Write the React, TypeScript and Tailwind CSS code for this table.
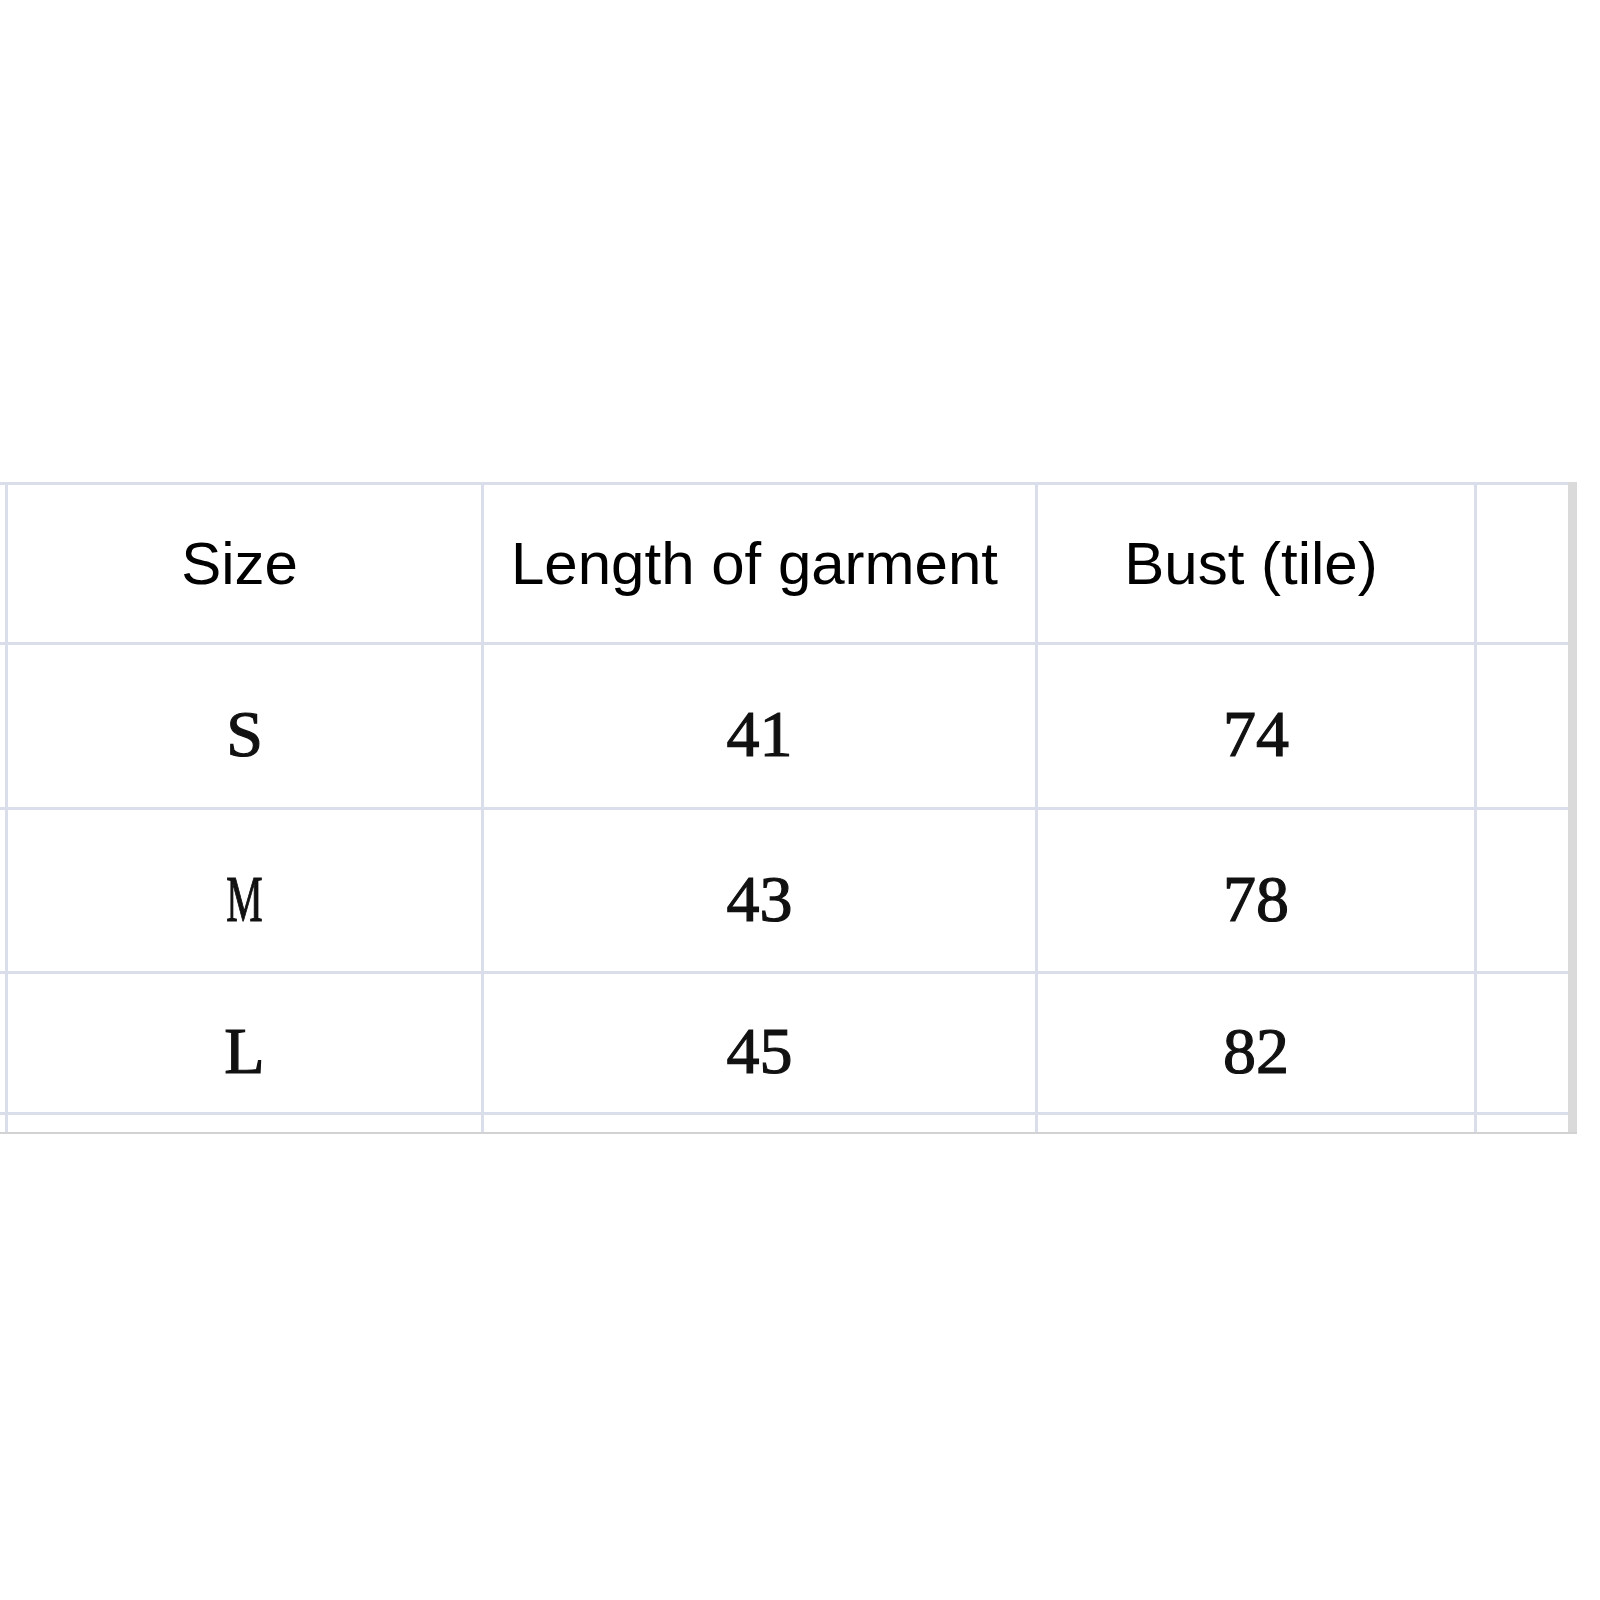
const headers = ["Size", "Length of garment", "Bust (tile)"];

const rows = [
  ["S", "41", "74"],
  ["M", "43", "78"],
  ["L", "45", "82"],
];

const rowHeights = ["h-[162px]", "h-[161px]", "h-[138px]"];

function BodyCell({ value }: { value: string }) {
  return (
    <div className="flex items-center justify-center bg-white pt-[16px]">
      <span
        className={`inline-block font-['Liberation_Serif',serif] text-[66px] leading-none text-[#111] [-webkit-text-stroke:1.2px_#111] ${
          value === "M" ? "scale-x-[0.62]" : ""
        }`}
      >
        {value}
      </span>
    </div>
  );
}

export default function App() {
  return (
    <div className="min-h-[1600px] w-[1600px] bg-white pt-[482px]">
      <div className="w-[1577px]">
        <div className="flex">
          {/* grid lines come from the gap showing the background */}
          <div className="grid grid-cols-[5px_473px_551px_436px_91px] gap-[3px] bg-[#d9deea] pt-[3px]">
            {/* header row */}
            <div className="h-[157px] bg-white" />
            {headers.map((h) => (
              <div
                key={h}
                className="flex h-[157px] items-center justify-center bg-white pr-[10px] font-['Liberation_Sans',Arial,sans-serif] text-[60px] text-black"
              >
                {h}
              </div>
            ))}
            <div className="h-[157px] bg-white" />

            {/* data rows */}
            {rows.map((r, i) => (
              <div key={r[0]} className="contents">
                <div className={`${rowHeights[i]} bg-white`} />
                {r.map((v, j) => (
                  <BodyCell key={j} value={v} />
                ))}
                <div className={`${rowHeights[i]} bg-white`} />
              </div>
            ))}

            {/* partial row cut off at the bottom */}
            <div className="h-[17px] bg-white" />
            <div className="h-[17px] bg-white" />
            <div className="h-[17px] bg-white" />
            <div className="h-[17px] bg-white" />
            <div className="h-[17px] bg-white" />
          </div>
          <div className="w-[9px] bg-[#dadada]" />
        </div>
        <div className="h-[2px] bg-[#d2d2d2]" />
      </div>
    </div>
  );
}
